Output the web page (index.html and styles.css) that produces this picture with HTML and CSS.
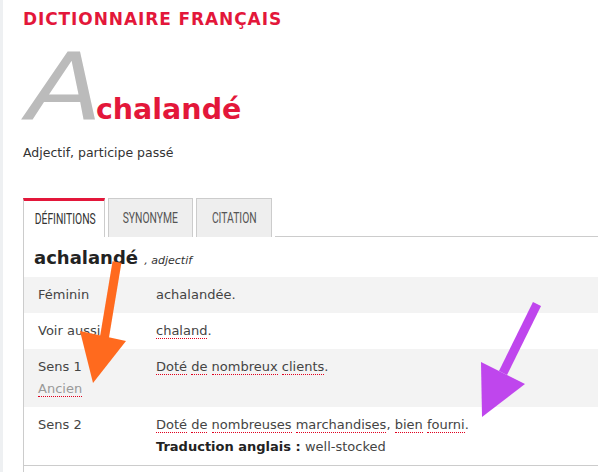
FILE: index.html
```html
<!DOCTYPE html>
<html lang="fr">
<head>
    <meta charset="UTF-8">
    <meta name="viewport" content="width=device-width, initial-scale=1.0">
    <title>Dictionnaire français - achalandé</title>
    <link rel="stylesheet" href="styles.css">
</head>
<body>
    <div class="bordure"></div>
    <main class="contenu">
        <h1 class="titre">DICTIONNAIRE FRANÇAIS</h1>
        <div class="mot">
            <span class="initiale">A</span><span class="reste">chalandé</span>
        </div>
        <p class="nature">Adjectif, participe passé</p>

        <div class="onglets">
            <div class="onglet actif"><span>DÉFINITIONS</span></div>
            <div class="onglet synonyme"><span>SYNONYME</span></div>
            <div class="onglet citation"><span>CITATION</span></div>
            <div class="ligne"></div>
        </div>

        <div class="panneau">
            <h2 class="entree">achalandé <span class="cat">, adjectif</span></h2>
            <table class="definitions">
                <tr class="gris">
                    <td class="cle">Féminin</td>
                    <td>achalandée.</td>
                </tr>
                <tr>
                    <td class="cle">Voir aussi</td>
                    <td><span class="lien">chaland</span>.</td>
                </tr>
                <tr class="gris">
                    <td class="cle">Sens 1<br><span class="lien pale">Ancien</span></td>
                    <td><span class="lien">Doté</span> <span class="lien">de</span> <span class="lien">nombreux</span> <span class="lien">clients</span>.</td>
                </tr>
                <tr>
                    <td class="cle">Sens 2</td>
                    <td><span class="lien">Doté</span> <span class="lien">de</span> <span class="lien">nombreuses</span> <span class="lien">marchandises</span>, <span class="lien">bien</span> <span class="lien">fourni</span>.<br><b>Traduction anglais :</b> well-stocked</td>
                </tr>
            </table>
        </div>
    </main>

    <!-- flèches d'annotation par-dessus la capture -->
    <svg class="fleches" width="598" height="472" viewBox="0 0 598 472">
        <line x1="117" y1="262" x2="104" y2="340" stroke="#ff6a1e" stroke-width="9"/>
        <polygon points="80,331 126,341 93,383" fill="#ff6a1e"/>
        <line x1="537" y1="304" x2="503" y2="373" stroke="#bf46ed" stroke-width="9"/>
        <polygon points="481,362 525,384 482,417" fill="#bf46ed"/>
    </svg>
</body>
</html>
```

FILE: styles.css
```css
body{
    margin:0;
    background-color:#fff;
    font-family:"DejaVu Sans", sans-serif;
    color:#333;
    position:relative;
    overflow:hidden;
}
.bordure{
    position:fixed;
    left:0;
    top:0;
    bottom:0;
    width:3px;
    background-color:#eef0f2;
}
.contenu{
    padding-left:23px;
    padding-top:8px;
}
.titre{
    margin:0;
    color:#e3173a;
    font-size:17px;
    font-weight:bold;
    letter-spacing:0.9px;
    line-height:22px;
}
.mot{
    margin-top:13px;
    height:90px;
    line-height:90px;
    white-space:nowrap;
}
.initiale{
    display:inline-block;
    font-family:"DejaVu Sans", sans-serif;
    font-style:italic;
    font-weight:200;
    color:#bbb;
    font-size:92px;
    transform:scaleX(1.2);
    transform-origin:left center;
    margin-right:6px;
    margin-left:4px;
}
.reste{
    color:#e3173a;
    font-weight:bold;
    font-size:28.5px;
}
.nature{
    margin:12px 0 0 0;
    font-size:12.5px;
    line-height:16px;
}
.onglets{
    display:flex;
    margin-top:37px;
    height:39px;
}
.onglet{
    font-family:Roboto, sans-serif;
    font-size:14px;
    color:#555;
    background-color:#eee;
    border:1px solid #ccc;
    border-bottom:none;
    line-height:38px;
    margin-right:3px;
    text-align:center;
    box-sizing:border-box;
    width:85px;
}
.onglet span{
    display:inline-block;
    transform:scaleX(0.74);
}
.onglet.actif{
    width:82px;
    background-color:#fff;
    color:#333;
    border-top:3px solid #e3173a;
    line-height:36px;
}
.onglet.citation{
    width:76px;
}
.ligne{
    flex:1;
    border-bottom:1px solid #ccc;
}
.panneau{
    border-left:1px solid #ccc;
    min-height:240px;
}
.entree{
    margin:0;
    padding:9px 0 0 10px;
    font-size:18px;
    line-height:24px;
    color:#222;
}
.cat{
    font-size:11px;
    font-style:italic;
    font-weight:normal;
    color:#333;
}
.definitions{
    width:100%;
    border-collapse:collapse;
    margin-top:4px;
    font-size:13px;
    color:#444;
    border-bottom:1px solid #ccc;
}
.definitions td{
    vertical-align:top;
    padding:7px 0 7px 0;
    line-height:22px;
}
.definitions td.cle{
    width:118px;
    padding-left:14px;
}
.definitions td b{
    color:#222;
}
.definitions tr.gris{
    background-color:#f3f3f3;
}
.lien{
    border-bottom:1px dotted #e0001e;
}
.pale{
    color:#999;
}
.fleches{
    position:absolute;
    left:0;
    top:0;
    pointer-events:none;
}
```
